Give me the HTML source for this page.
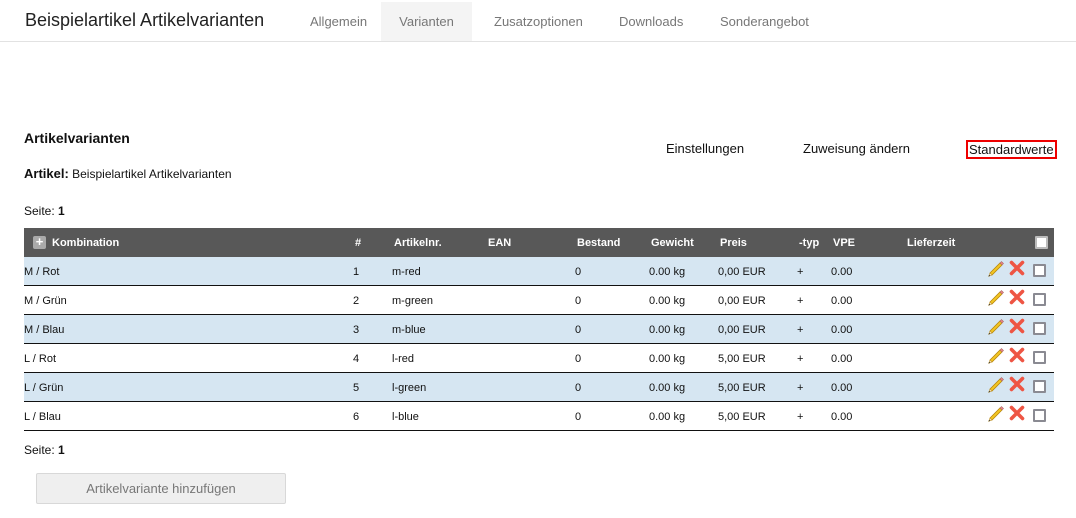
<!DOCTYPE html>
<html><head><meta charset="utf-8"><style>
*{margin:0;padding:0;box-sizing:border-box}
body{width:1076px;height:518px;background:#fff;font-family:"Liberation Sans",Arial,sans-serif;color:#111;position:relative;overflow:hidden}
.a{position:absolute;white-space:nowrap}
.top{position:absolute;left:0;top:0;width:1076px;height:42px;border-bottom:1px solid #e2e2e2}
.tab{position:absolute;top:2px;height:39px;line-height:39px;font-size:13px;color:#777}
.hdr{position:absolute;left:24px;top:228px;width:1030px;height:29px;background:#585858;color:#fff;font-size:11px;font-weight:bold}
.hdr span{position:absolute;top:9px}
.row{position:absolute;left:24px;width:1030px;height:29px;border-bottom:1px solid #111;font-size:11px}
.row span{position:absolute;top:9px}
.cb{position:absolute;width:13px;height:13px;border:2px solid #8a8a92;background:#fff;border-radius:1px}
.ic{position:absolute;top:2px}
</style></head><body>
<svg width="0" height="0" style="position:absolute"><defs>
<g id="pen"><path d="M3 14 L13 4 L15 6 L5 16 Z" fill="#f3c623" stroke="#b8860b" stroke-width="0.8"/><path d="M13 4 L14.5 2.5 L16.5 4.5 L15 6 Z" fill="#e88" stroke="#a66" stroke-width="0.6"/><path d="M3 14 L5 16 L1.5 17.5 Z" fill="#f5deb3" stroke="#b8860b" stroke-width="0.5"/><path d="M1.5 17.5 L2.3 15.7 L3.3 16.7Z" fill="#333"/></g>
<g id="x"><path d="M3.5 3.5 L14.5 14.5 M14.5 3.5 L3.5 14.5" stroke="#ee5544" stroke-width="3.6" stroke-linecap="round"/></g>
</defs></svg>
<div class="top">
<div class="a" style="left:25px;top:10px;font-size:18px;color:#222">Beispielartikel Artikelvarianten</div>
<div class="tab" style="left:310px">Allgemein</div>
<div class="tab" style="left:381px;width:91px;background:#f4f4f4;text-align:center">Varianten</div>
<div class="tab" style="left:494px">Zusatzoptionen</div>
<div class="tab" style="left:619px">Downloads</div>
<div class="tab" style="left:720px">Sonderangebot</div>
</div>
<div class="a" style="left:24px;top:130px;font-size:14px;font-weight:bold">Artikelvarianten</div>
<div class="a" style="left:666px;top:141px;font-size:13px">Einstellungen</div>
<div class="a" style="left:803px;top:141px;font-size:13px">Zuweisung ändern</div>
<div class="a" style="left:966px;top:140px;font-size:13px;border:2px solid #e00;padding:0 1px;line-height:15px">Standardwerte</div>
<div class="a" style="left:24px;top:166px;font-size:12px"><b style="font-size:13px">Artikel:</b> Beispielartikel Artikelvarianten</div>
<div class="a" style="left:24px;top:204px;font-size:12px">Seite: <b>1</b></div>
<div class="hdr">
<div style="position:absolute;left:9px;top:8px;width:13px;height:13px;background:#aaa;border-radius:2px;color:#fff;font-size:13px;line-height:12px;text-align:center;font-weight:bold">+</div>
<span style="left:28px">Kombination</span><span style="left:331px">#</span><span style="left:370px">Artikelnr.</span><span style="left:464px">EAN</span><span style="left:553px">Bestand</span><span style="left:627px">Gewicht</span><span style="left:696px">Preis</span><span style="left:775px">-typ</span><span style="left:809px">VPE</span><span style="left:883px">Lieferzeit</span>
<div class="cb" style="left:1011px;top:8px;border-color:#bbb"></div>
</div>
<div class="row" style="top:257px;background:#d6e6f2"><span style="left:0">M / Rot</span><span style="left:329px">1</span><span style="left:368px">m-red</span><span style="left:551px">0</span><span style="left:625px">0.00 kg</span><span style="left:694px">0,00 EUR</span><span style="left:773px">+</span><span style="left:807px">0.00</span><svg class="ic" style="left:963px" width="18" height="19"><use href="#pen"/></svg><svg class="ic" style="left:984px" width="18" height="18"><use href="#x"/></svg><div class="cb" style="left:1009px;top:7px"></div></div>
<div class="row" style="top:286px"><span style="left:0">M / Grün</span><span style="left:329px">2</span><span style="left:368px">m-green</span><span style="left:551px">0</span><span style="left:625px">0.00 kg</span><span style="left:694px">0,00 EUR</span><span style="left:773px">+</span><span style="left:807px">0.00</span><svg class="ic" style="left:963px" width="18" height="19"><use href="#pen"/></svg><svg class="ic" style="left:984px" width="18" height="18"><use href="#x"/></svg><div class="cb" style="left:1009px;top:7px"></div></div>
<div class="row" style="top:315px;background:#d6e6f2"><span style="left:0">M / Blau</span><span style="left:329px">3</span><span style="left:368px">m-blue</span><span style="left:551px">0</span><span style="left:625px">0.00 kg</span><span style="left:694px">0,00 EUR</span><span style="left:773px">+</span><span style="left:807px">0.00</span><svg class="ic" style="left:963px" width="18" height="19"><use href="#pen"/></svg><svg class="ic" style="left:984px" width="18" height="18"><use href="#x"/></svg><div class="cb" style="left:1009px;top:7px"></div></div>
<div class="row" style="top:344px"><span style="left:0">L / Rot</span><span style="left:329px">4</span><span style="left:368px">l-red</span><span style="left:551px">0</span><span style="left:625px">0.00 kg</span><span style="left:694px">5,00 EUR</span><span style="left:773px">+</span><span style="left:807px">0.00</span><svg class="ic" style="left:963px" width="18" height="19"><use href="#pen"/></svg><svg class="ic" style="left:984px" width="18" height="18"><use href="#x"/></svg><div class="cb" style="left:1009px;top:7px"></div></div>
<div class="row" style="top:373px;background:#d6e6f2"><span style="left:0">L / Grün</span><span style="left:329px">5</span><span style="left:368px">l-green</span><span style="left:551px">0</span><span style="left:625px">0.00 kg</span><span style="left:694px">5,00 EUR</span><span style="left:773px">+</span><span style="left:807px">0.00</span><svg class="ic" style="left:963px" width="18" height="19"><use href="#pen"/></svg><svg class="ic" style="left:984px" width="18" height="18"><use href="#x"/></svg><div class="cb" style="left:1009px;top:7px"></div></div>
<div class="row" style="top:402px"><span style="left:0">L / Blau</span><span style="left:329px">6</span><span style="left:368px">l-blue</span><span style="left:551px">0</span><span style="left:625px">0.00 kg</span><span style="left:694px">5,00 EUR</span><span style="left:773px">+</span><span style="left:807px">0.00</span><svg class="ic" style="left:963px" width="18" height="19"><use href="#pen"/></svg><svg class="ic" style="left:984px" width="18" height="18"><use href="#x"/></svg><div class="cb" style="left:1009px;top:7px"></div></div>
<div class="a" style="left:24px;top:443px;font-size:12px">Seite: <b>1</b></div>
<div class="a" style="left:36px;top:473px;width:250px;height:31px;background:#efefef;border:1px solid #d8d8d8;border-radius:2px;font-size:13px;color:#777;text-align:center;line-height:29px">Artikelvariante hinzufügen</div>
</body></html>
